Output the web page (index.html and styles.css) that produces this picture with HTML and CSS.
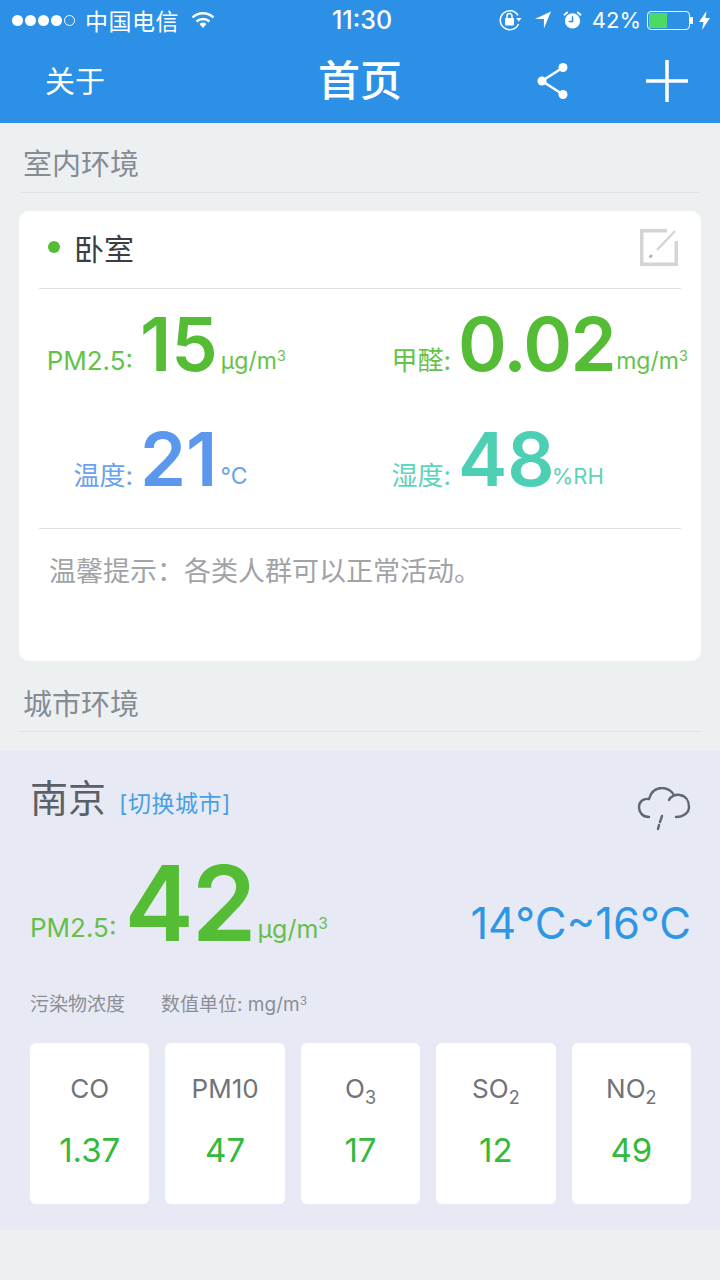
FILE: index.html
```html
<!DOCTYPE html>
<html lang="zh-CN">
<head>
  <meta charset="UTF-8" />
  <title>首页</title>
  <meta name="viewport" content="width=device-width, initial-scale=1.0" />
  <link rel="stylesheet" href="styles.css">
</head>
<body>
  <header class="top">
    <div class="status">
      <div class="status-left">
        <span class="signal"><i></i><i></i><i></i><i></i><i class="off"></i></span>
        <span class="carrier">中国电信</span>
        <svg class="wifi" width="24" height="18" viewBox="0 0 24 18">
          <path d="M1.5 6.5a15 15 0 0 1 21 0" fill="none" stroke="#fff" stroke-width="2.4"/>
          <path d="M5.5 10.5a9.5 9.5 0 0 1 13 0" fill="none" stroke="#fff" stroke-width="2.4"/>
          <path d="M8.5 13a5 5 0 0 1 7 0L12 17z" fill="#fff"/>
        </svg>
      </div>
      <div class="time">11:30</div>
      <div class="status-right">
        <svg width="23" height="22" viewBox="0 0 23 22">
          <path d="M19 6.5A9.5 9.5 0 1 0 19.5 15" fill="none" stroke="#fff" stroke-width="1.5"/>
          <path d="M17 9h5.5l-2.7 3.5z" fill="#fff"/>
          <rect x="6" y="9" width="9" height="7.5" rx="1" fill="#fff"/>
          <path d="M8 9V7a2.5 2.5 0 0 1 5 0v2" fill="none" stroke="#fff" stroke-width="1.5"/>
        </svg>
        <svg class="gap-s" width="17" height="18" viewBox="0 0 18 18">
          <path d="M18 0 10.5 18V8H1z" fill="#fff"/>
        </svg>
        <svg class="gap-s" width="19" height="20" viewBox="0 0 20 20">
          <circle cx="10" cy="11" r="8" fill="#fff"/>
          <path d="M10 6v5.5H6" fill="none" stroke="#2b90e6" stroke-width="1.6"/>
          <path d="M1 5 5 1.5M19 5l-4-3.5" stroke="#fff" stroke-width="2"/>
        </svg>
        <span class="battery-text">42%</span>
        <span class="battery"><span class="battery-level"></span></span>
        <span class="battery-tip"></span>
        <svg class="bolt" width="11" height="19" viewBox="0 0 11 19">
          <path d="M7.5 0 0 11h4.500L3 19l8-12H6.500z" fill="#fff"/>
        </svg>
      </div>
    </div>
    <nav class="nav">
      <a class="nav-about">关于</a>
      <h1 class="nav-title">首页</h1>
      <div class="nav-actions">
        <svg width="34" height="40" viewBox="0 0 34 40">
          <path d="M29 6.500 8 20l21 13.500" fill="none" stroke="#fff" stroke-width="2.500"/>
          <circle cx="29" cy="6.500" r="4.500" fill="#fff"/>
          <circle cx="8" cy="20" r="4.500" fill="#fff"/>
          <circle cx="29" cy="33.500" r="4.500" fill="#fff"/>
        </svg>
        <svg width="42" height="42" viewBox="0 0 42 42">
          <path d="M21 0v42M0 21h42" stroke="#fff" stroke-width="3.500"/>
        </svg>
      </div>
    </nav>
  </header>

  <h2 class="section-title">室内环境</h2>

  <section class="room">
    <div class="room-head">
      <span class="dot"></span>
      <span class="room-name">卧室</span>
      <svg class="edit" width="38" height="37" viewBox="0 0 38 37">
        <path d="M27 1.750H1.750v33.500h34.500V12" fill="none" stroke="#d2d4d7" stroke-width="3.500"/>
        <path d="M35 2 17 21" fill="none" stroke="#d2d4d7" stroke-width="2.500"/>
        <path d="M12 26l-2.500 2.500" fill="none" stroke="#b0b3b8" stroke-width="2.500"/>
      </svg>
    </div>
    <div class="metrics">
      <div class="metric green">
        <span class="metric-label">PM2.5:</span>
        <span class="metric-num">15</span>
        <span class="metric-unit">µg/m<sup>3</sup></span>
      </div>
      <div class="metric green">
        <span class="metric-label">甲醛:</span>
        <span class="metric-num tight">0.02</span>
        <span class="metric-unit close">mg/m<sup>3</sup></span>
      </div>
      <div class="metric blue">
        <span class="metric-label">温度:</span>
        <span class="metric-num">21</span>
        <span class="metric-unit">°C</span>
      </div>
      <div class="metric teal">
        <span class="metric-label">湿度:</span>
        <span class="metric-num">48</span>
        <span class="metric-unit narrow">%RH</span>
      </div>
    </div>
    <p class="tip">温馨提示：各类人群可以正常活动。</p>
  </section>

  <h2 class="section-title city-title">城市环境</h2>

  <section class="city">
    <div class="city-head">
      <span class="city-name">南京</span>
      <a class="city-switch">[切换城市]</a>
      <svg class="cloud" width="54" height="44" viewBox="0 0 54 44">
        <path d="M12 30C5 30 2 25 2 20c0-5 4-9 10-8C14 5 19 1 25 1c5 0 10 3 12 7" fill="none" stroke="#62666d" stroke-width="2.400" stroke-linecap="round"/>
        <path d="M32 13c2-4 7-6 11-5 6 1 9 6 9 12 0 6-6 10-13 10" fill="none" stroke="#62666d" stroke-width="2.400" stroke-linecap="round"/>
        <path d="M25 29l-2 6M22 38l-1 4" fill="none" stroke="#62666d" stroke-width="2.400" stroke-linecap="round"/>
      </svg>
    </div>
    <div class="city-now">
      <span class="city-label">PM2.5:</span>
      <span class="city-num">42</span>
      <span class="city-unit">µg/m<sup>3</sup></span>
      <span class="city-temp">14°C~16°C</span>
    </div>
    <div class="city-note">
      <span>污染物浓度</span>
      <span>数值单位: mg/m<sup>3</sup></span>
    </div>
    <ul class="tiles">
      <li class="tile"><span class="tile-name">CO</span><span class="tile-value">1.37</span></li>
      <li class="tile"><span class="tile-name">PM10</span><span class="tile-value">47</span></li>
      <li class="tile"><span class="tile-name">O<sub>3</sub></span><span class="tile-value">17</span></li>
      <li class="tile"><span class="tile-name">SO<sub>2</sub></span><span class="tile-value">12</span></li>
      <li class="tile"><span class="tile-name">NO<sub>2</sub></span><span class="tile-value">49</span></li>
    </ul>
  </section>
</body>
</html>
```

FILE: styles.css
```css
:root {
  --blue: #2b90e6;
  --green: #55bc35;
  --green-light: #66bf4c;
  --line: #e0e2e4;
  --font: Inter, "Noto Sans CJK SC", sans-serif;
}

html, body {
  margin: 0;
  padding: 0;
}

body {
  width: 720px;
  height: 1280px;
  overflow: hidden;
  background-color: #edf0f1;
  font-family: var(--font);
  color: #333;
}

sup {
  font-size: 0.62em;
  line-height: 0;
  vertical-align: 0.55em;
}

/* top bar */
.top {
  height: 123px;
  box-sizing: border-box;
  background-color: var(--blue);
  color: white;
}

.status {
  height: 40px;
  display: grid;
  grid-template-columns: 1fr auto 1fr;
  align-items: center;
  padding: 0 10px 0 12px;
}

.status-left, .status-right {
  display: flex;
  align-items: center;
}

.status-right {
  justify-content: flex-end;
}

.signal {
  display: flex;
  gap: 2px;
}

.signal i {
  width: 11px;
  height: 11px;
  border-radius: 50%;
  background-color: white;
  box-sizing: border-box;
}

.signal i.off {
  background-color: transparent;
  border: 1px solid white;
}

.carrier {
  font-size: 23px;
  letter-spacing: 0.5px;
  margin-left: 10px;
}

.wifi {
  margin-left: 12px;
}

.time {
  font-size: 25px;
  font-weight: 500;
  margin-left: 2px;
}

.gap-s {
  margin-left: 12px;
}

.battery-text {
  font-size: 22px;
  margin-left: 10px;
}

.battery {
  width: 43px;
  height: 19px;
  box-sizing: border-box;
  margin-left: 6px;
  padding: 1px;
  border: 1px solid white;
  border-radius: 4px;
  display: flex;
}

.battery-level {
  width: 18px;
  background-color: #4cd964;
}

.battery-tip {
  width: 3px;
  height: 7px;
  background-color: white;
}

.bolt {
  margin-left: 6px;
}

.nav {
  height: 83px;
  display: grid;
  grid-template-columns: 1fr auto 1fr;
  align-items: center;
  padding: 0 32px 2px 32px;
  box-sizing: border-box;
}

.nav-about {
  font-size: 30px;
  margin-left: 13px;
  padding-bottom: 4px;
}

.nav-title {
  margin: 0;
  font-size: 42px;
  font-weight: 500;
  line-height: 1;
}

.nav-actions {
  display: flex;
  justify-content: flex-end;
  align-items: center;
  gap: 78px;
}

/* section headings */
.section-title {
  margin: 0 20px;
  padding: 21px 3px 6px;
  line-height: 42px;
  font-size: 29px;
  font-weight: 400;
  color: #868b94;
  border-bottom: 1px solid var(--line);
}

/* room card */
.room {
  height: 450px;
  margin: 18px 19px 0;
  box-sizing: border-box;
  background-color: white;
  border-radius: 10px;
  overflow: hidden;
}

.room-head {
  height: 78px;
  margin: 0 20px;
  padding: 0 3px 5px 9px;
  box-sizing: border-box;
  display: flex;
  align-items: center;
  border-bottom: 1px solid var(--line);
}

.dot {
  width: 12px;
  height: 12px;
  border-radius: 50%;
  background-color: var(--green);
}

.room-name {
  margin-left: 14px;
  font-size: 30px;
  color: #3c3e42;
}

.edit {
  margin-left: auto;
}

.metrics {
  height: 240px;
  margin: 0 20px;
  box-sizing: border-box;
  display: grid;
  grid-template-columns: 318px 1fr;
  grid-template-rows: 93px 115px;
  border-bottom: 1px solid var(--line);
}

.metric {
  display: flex;
  align-items: flex-end;
}

.metric-label {
  width: 94px;
  text-align: right;
  font-size: 26px;
  line-height: 30px;
  margin-right: 7px;
  padding-bottom: 6px;
  opacity: 0.9;
}

.metric-num {
  font-size: 74px;
  font-weight: 600;
  line-height: 76px;
}

.metric-num.tight {
  letter-spacing: -1.5px;
}

.metric-unit {
  font-size: 23px;
  line-height: 30px;
  margin-left: 3px;
  padding-bottom: 6px;
  opacity: 0.9;
}

.metric-unit.close {
  margin-left: 1px;
}

.metric-unit.narrow {
  font-size: 22px;
  margin-left: -3px;
}

.green {
  color: var(--green);
}

.blue {
  color: #5b97ec;
}

.teal {
  color: #4dcfb4;
}

.tip {
  margin: 24px 0 0 30px;
  font-size: 27px;
  line-height: 38px;
  color: #a1a3a6;
}

.city-title {
  padding-top: 23px;
  padding-bottom: 5px;
}

/* city panel */
.city {
  height: 480px;
  margin-top: 18px;
  box-sizing: border-box;
  padding: 0 29px 0 30px;
  background-color: #e7eaf5;
}

.city-head {
  height: 100px;
  padding-top: 23px;
  box-sizing: border-box;
  display: flex;
  align-items: baseline;
}

.city-name {
  font-size: 38px;
  line-height: 50px;
  color: #5c6066;
}

.city-switch {
  margin-left: 13px;
  font-size: 23px;
  letter-spacing: 0.5px;
  color: #4a9fe3;
}

.cloud {
  margin-left: auto;
  margin-top: 14px;
  align-self: flex-start;
}

.city-now {
  height: 106px;
  display: flex;
  align-items: flex-end;
  color: var(--green);
}

.city-label {
  font-size: 26px;
  line-height: 30px;
  padding-bottom: 13px;
  color: var(--green-light);
}

.city-num {
  margin-left: 8px;
  font-size: 104px;
  font-weight: 600;
  line-height: 106px;
  letter-spacing: -2px;
}

.city-unit {
  margin-left: 3px;
  font-size: 25px;
  line-height: 30px;
  padding-bottom: 12px;
  color: var(--green-light);
}

.city-temp {
  margin-left: auto;
  font-size: 43.5px;
  line-height: 50px;
  padding-bottom: 8px;
  color: #2f96e4;
}

.city-note {
  margin-top: 35px;
  display: flex;
  gap: 36px;
  font-size: 19px;
  line-height: 28px;
  color: #8b8e94;
}

.tiles {
  list-style: none;
  margin: 24px 0 0;
  padding: 0;
  display: grid;
  grid-template-columns: repeat(5, 1fr);
  gap: 16px;
}

.tile {
  height: 161px;
  display: flex;
  flex-direction: column;
  align-items: center;
  background-color: white;
  border-radius: 6px;
}

.tile-name {
  margin-top: 28px;
  font-size: 26px;
  line-height: 36px;
  color: #707378;
}

.tile-name sub {
  font-size: 18px;
  line-height: 0;
}

.tile-value {
  margin-top: 22px;
  font-size: 33px;
  line-height: 42px;
  color: #33b93b;
}
```
